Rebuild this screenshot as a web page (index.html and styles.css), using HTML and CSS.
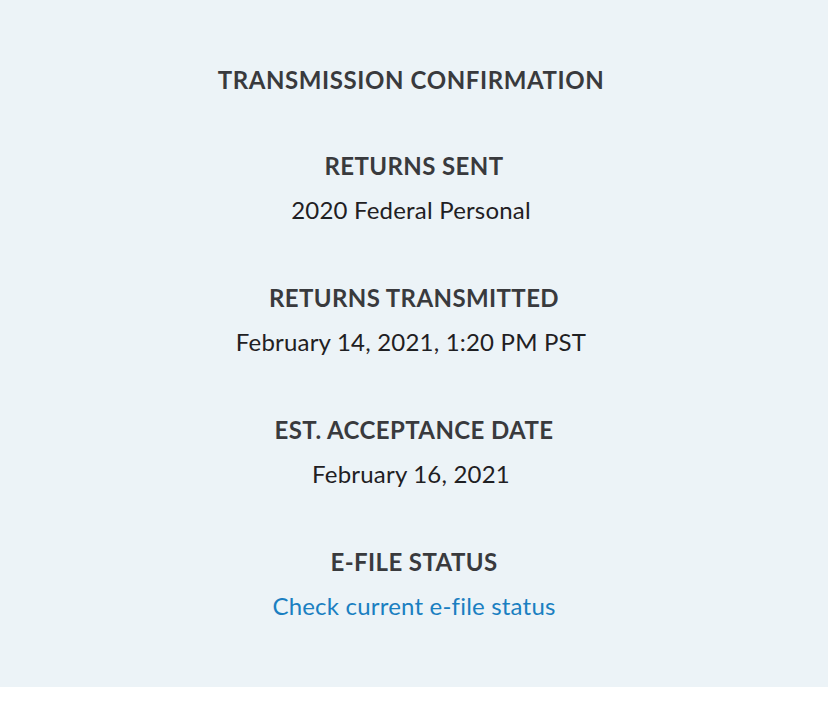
FILE: index.html
```html
<!DOCTYPE html>
<html>
<head>
<meta charset="utf-8">
<link rel="stylesheet" href="styles.css">
</head>
<body>
<main class="panel">
  <h1 class="title">TRANSMISSION CONFIRMATION</h1>
  <section class="group">
    <h2 class="label">RETURNS SENT</h2>
    <p class="value">2020 Federal Personal</p>
  </section>
  <section class="group">
    <h2 class="label">RETURNS TRANSMITTED</h2>
    <p class="value">February 14, 2021, 1:20 PM PST</p>
  </section>
  <section class="group">
    <h2 class="label">EST. ACCEPTANCE DATE</h2>
    <p class="value">February 16, 2021</p>
  </section>
  <section class="group">
    <h2 class="label">E-FILE STATUS</h2>
    <p class="value"><a class="link" href="#">Check current e-file status</a></p>
  </section>
</main>
</body>
</html>
```

FILE: styles.css
```css
html, body {
  margin: 0;
  padding: 0;
  background: #ffffff;
}
body {
  font-family: Lato, "Open Sans", sans-serif;
  color: #393a3d;
}
.panel {
  background: #ecf3f7;
  height: 687px;
  box-sizing: border-box;
  padding-top: 64px;
  display: flex;
  flex-direction: column;
  align-items: center;
  padding-right: 6px;
}
.title {
  margin: 0 0 54px;
  font-size: 24px;
  line-height: 32px;
  font-weight: 700;
  letter-spacing: 0.6px;
}
.group {
  display: flex;
  flex-direction: column;
  align-items: center;
  margin-bottom: 56px;
}
.label {
  margin: 0;
  padding-left: 6px;
  font-size: 24px;
  line-height: 32px;
  font-weight: 700;
  letter-spacing: 0.4px;
}
.value {
  margin: 12px 0 0;
  font-size: 24px;
  line-height: 32px;
  font-weight: 400;
  color: #1f2023;
  letter-spacing: 0.2px;
}
.link {
  display: inline-block;
  padding-left: 6px;
  color: #1a7fc1;
  text-decoration: none;
}
```
